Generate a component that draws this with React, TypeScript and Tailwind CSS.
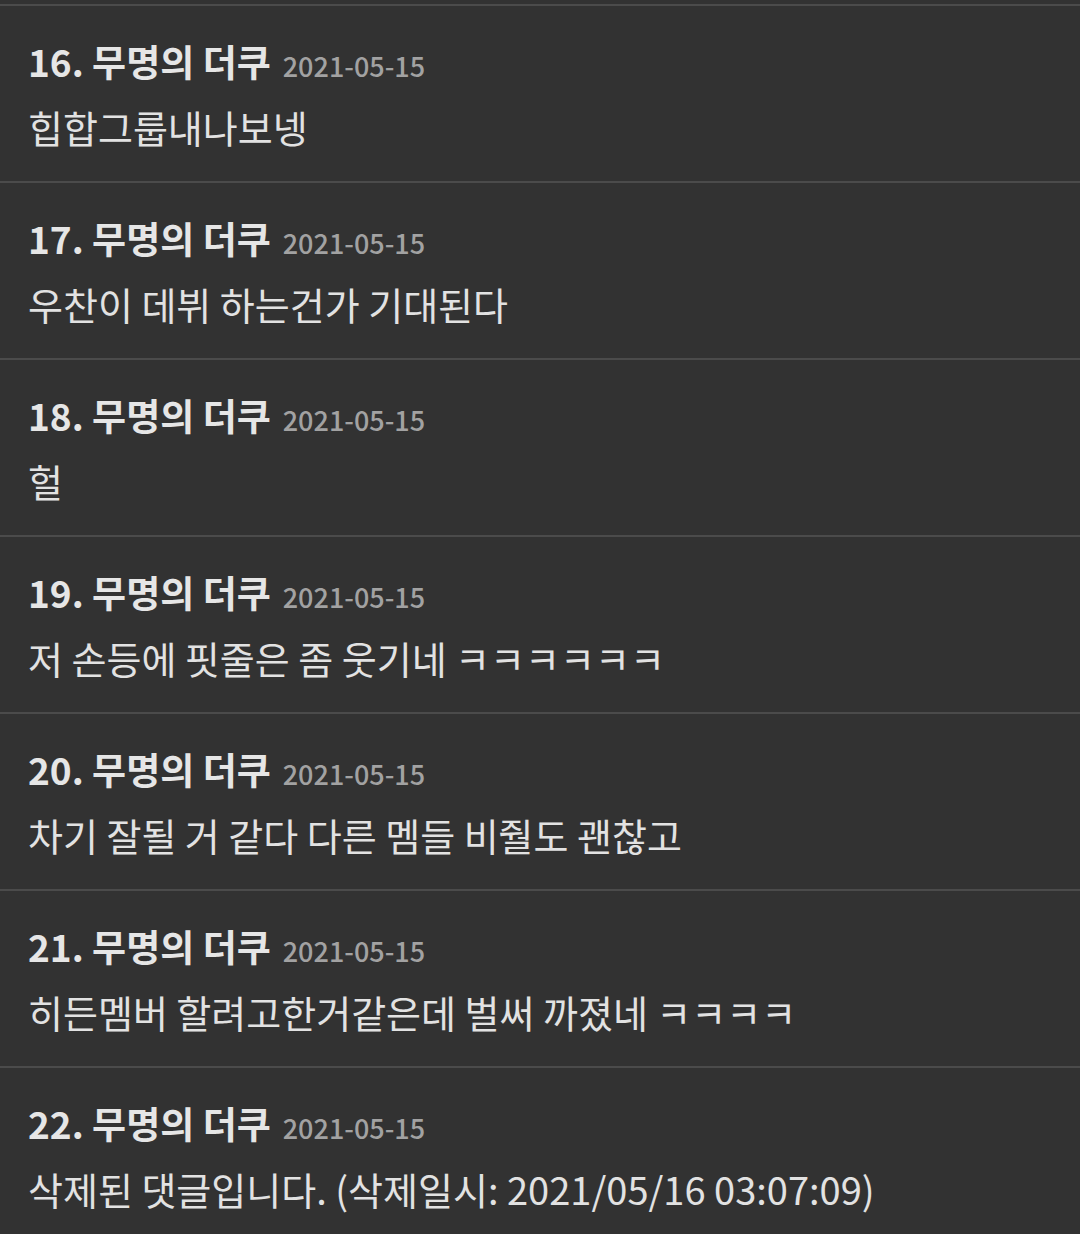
const comments = [
  { no: 16, author: "무명의 더쿠", date: "2021-05-15", body: "힙합그룹내나보넹" },
  { no: 17, author: "무명의 더쿠", date: "2021-05-15", body: "우찬이 데뷔 하는건가 기대된다" },
  { no: 18, author: "무명의 더쿠", date: "2021-05-15", body: "헐" },
  { no: 19, author: "무명의 더쿠", date: "2021-05-15", body: "저 손등에 핏줄은 좀 웃기네 ㅋㅋㅋㅋㅋㅋ" },
  { no: 20, author: "무명의 더쿠", date: "2021-05-15", body: "차기 잘될 거 같다 다른 멤들 비줠도 괜찮고" },
  { no: 21, author: "무명의 더쿠", date: "2021-05-15", body: "히든멤버 할려고한거같은데 벌써 까졌네 ㅋㅋㅋㅋ" },
  { no: 22, author: "무명의 더쿠", date: "2021-05-15", body: "삭제된 댓글입니다. (삭제일시: 2021/05/16 03:07:09)" },
];

export default function App() {
  return (
    <div
      className="w-[1080px] h-[1234px] overflow-hidden bg-[#323232] pt-[4px]"
      style={{ fontFamily: '"Noto Sans CJK KR", "Noto Sans", sans-serif' }}
    >
      {comments.map((c) => (
        <div key={c.no} className="border-t-2 border-[#4b4b4b] h-[177px] pl-[28px] pt-[33px]">
          <div className="flex items-baseline h-[44px] leading-[44px] whitespace-nowrap">
            <span className="text-[37px] font-bold text-[#e6e6e6]">
              {c.no}. {c.author}
            </span>
            <span className="ml-[12px] text-[27px] font-medium text-[#a2a2a2]">{c.date}</span>
          </div>
          <div className="mt-[22px] h-[44px] leading-[44px] text-[38px] text-[#e2e2e2] whitespace-nowrap">
            {c.body}
          </div>
        </div>
      ))}
    </div>
  );
}
